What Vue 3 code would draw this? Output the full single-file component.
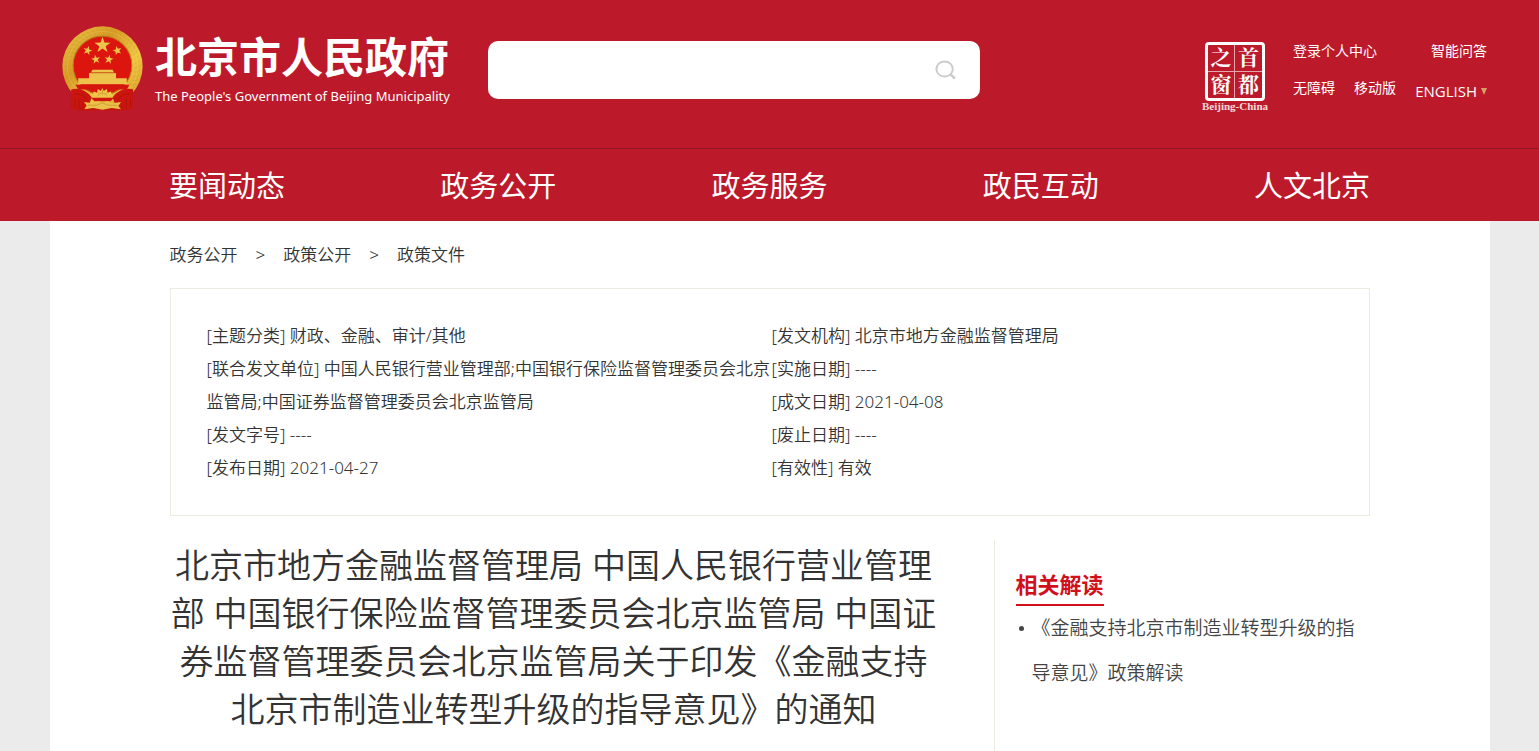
<script setup>
const nav = ['要闻动态', '政务公开', '政务服务', '政民互动', '人文北京']
const crumbs = ['政务公开', '政策公开', '政策文件']
const metaLeft = [
  ['主题分类', '财政、金融、审计/其他'],
  ['联合发文单位', '中国人民银行营业管理部;中国银行保险监督管理委员会北京监管局;中国证券监督管理委员会北京监管局'],
  ['发文字号', '----'],
  ['发布日期', '2021-04-27'],
]
const metaRight = [
  ['发文机构', '北京市地方金融监督管理局'],
  ['实施日期', '----'],
  ['成文日期', '2021-04-08'],
  ['废止日期', '----'],
  ['有效性', '有效'],
]
const star = (cx, cy, r, turn = 0) =>
  Array.from({ length: 10 }, (_, i) => {
    const a = ((i * 36 - 90 + turn) * Math.PI) / 180
    const d = i % 2 ? r * 0.4 : r
    return `${(cx + d * Math.cos(a)).toFixed(1)},${(cy + d * Math.sin(a)).toFixed(1)}`
  }).join(' ')
const stars = [
  star(120, 57, 25),
  star(76, 73, 14, 15),
  star(100, 99, 14, -10),
  star(139, 99, 14, 10),
  star(164, 73, 14, -15),
]
const rays = Array.from({ length: 48 }, (_, i) => i * 7.5)
</script>

<template>
  <div class="page">
    <header>
      <div class="top">
        <a class="brand" href="#">
          <svg class="emblem" viewBox="0 0 240 252" aria-hidden="true">
            <defs>
              <linearGradient id="gold" x1="0" y1="0" x2="1" y2="1">
                <stop offset="0" stop-color="#e9c64a" />
                <stop offset=".35" stop-color="#d79a24" />
                <stop offset=".65" stop-color="#f0c744" />
                <stop offset="1" stop-color="#d29220" />
              </linearGradient>
            </defs>
            <path d="M32 196 26 244 62 251 92 250 148 250 198 249 211 238 207 194Z" fill="#c3140d" />
            <circle cx="120" cy="120" r="119" fill="url(#gold)" />
            <g fill="none" stroke="#b98a22" stroke-width="2" opacity=".35">
              <path v-for="r in rays" :key="r" :transform="`rotate(${r} 120 120)`" d="M116 8q8 5 8 17" />
              <circle cx="120" cy="120" r="104" stroke="#f4dc73" />
            </g>
            <circle cx="120" cy="117" r="87" fill="#dc160e" stroke="#b87a18" stroke-width="3" />
            <g fill="#eac54a"><polygon v-for="s in stars" :key="s" :points="s" /></g>
            <g fill="#edc34c">
              <path d="M90 130h60l4 8H86zM80 139h80v17H80zM48 155h144v18H48z" />
            </g>
            <path d="M84 139h72" stroke="#b76a16" stroke-width="2" />
            <path d="M40 174h160l-8 14H48z" fill="#d5160e" />
            <path d="M27 188q38-8 61 24l-14 38-14-20-8 20-22-5zM211 188q-38-8-61 24l14 38 14-20 8 20 22-5z" fill="#cb150e" />
            <path d="M38 202q24-4 37 18M202 202q-24-4-37 18M38 214v28M203 214v28M50 216v30M191 216v30" fill="none" stroke="#a3130e" stroke-width="2" />
            <path d="m88 212 6-18 10 4 2-11 9 6 4-9 5 9 9-6 2 11 10-4 6 18z" fill="#efc64a" />
            <path d="M105 208q14-20 30 0M120 190v14M106 196l8 9M134 196l-8 9" fill="none" stroke="#c08a26" stroke-width="1.5" />
            <path d="M86 213h68l-10 10H96z" fill="#cf170f" />
            <path d="m65 225 27 4 15-7 13 6 14-6 14 7 27-4-8 12 8 10-28-4-27 5-27-5-27 4 7-11z" fill="#eac04a" />
            <path d="M77 235h26l17-7 17 7h26" fill="none" stroke="#b98024" stroke-width="1.5" />
          </svg>
          <span class="names">
            <strong>北京市人民政府</strong>
            <span class="en">The People's Government of Beijing Municipality</span>
          </span>
        </a>
        <form class="search" role="search" @submit.prevent>
          <input type="text" aria-label="搜索" />
          <button type="submit" aria-label="搜索">
            <svg width="22" height="22" viewBox="0 0 22 22" fill="none" stroke="#ccc" stroke-width="2">
              <ellipse cx="10.6" cy="10" rx="8.2" ry="7.6" />
              <path d="m16 15 5 4.5" stroke-width="2.4" />
            </svg>
          </button>
        </form>
        <a class="seal" href="#">
          <span class="stamp"><span>之</span><span>首</span><span>窗</span><span>都</span></span>
          <small>Beijing-China</small>
        </a>
        <div class="links">
          <div><a href="#">登录个人中心</a><a href="#">智能问答</a></div>
          <div>
            <a href="#">无障碍</a><a href="#">移动版</a>
            <a class="lang" href="#">ENGLISH<svg width="6" height="7" viewBox="0 0 6 7" aria-hidden="true"><path d="M0 0h6L3 7z" fill="#d9a066" /></svg></a>
          </div>
        </div>
      </div>
      <nav>
        <div><a v-for="n in nav" :key="n" href="#">{{ n }}</a></div>
      </nav>
    </header>

    <main>
      <div class="crumbs">
        <template v-for="(c, i) in crumbs" :key="c">
          <span v-if="i">&gt;</span><a href="#">{{ c }}</a>
        </template>
      </div>
      <section class="meta">
        <ul><li v-for="m in metaLeft" :key="m[0]">[{{ m[0] }}] {{ m[1] }}</li></ul>
        <ul><li v-for="m in metaRight" :key="m[0]">[{{ m[0] }}] {{ m[1] }}</li></ul>
      </section>
      <div class="body">
        <h1>北京市地方金融监督管理局 中国人民银行营业管理部 中国银行保险监督管理委员会北京监管局 中国证券监督管理委员会北京监管局关于印发《金融支持北京市制造业转型升级的指导意见》的通知</h1>
        <aside>
          <h2>相关解读</h2>
          <ul>
            <li><a href="#">《金融支持北京市制造业转型升级的指导意见》政策解读</a></li>
          </ul>
        </aside>
      </div>
    </main>
  </div>
</template>

<style>
body { background: #ebebeb; }
</style>

<style scoped>
.page {
  font-family: "Open Sans", "Noto Sans CJK SC", sans-serif;
  color: #333;
  display: flex;
  flex-direction: column;
  min-height: 100vh;
}
.page * { box-sizing: border-box; }
a { color: inherit; text-decoration: none; }
ul { list-style: none; margin: 0; padding: 0; }
header { background: #bc1a2b; color: #fff; }
.top { height: 148px; padding: 0 50px 0 62px; display: flex; align-items: flex-start; }
.brand { display: flex; gap: 12px; padding-top: 26px; }
.emblem { width: 81px; height: 85px; flex: none; }
.names { display: flex; flex-direction: column; width: 294px; white-space: nowrap; }
.names strong { font-size: 42px; line-height: 62px; font-weight: 700; }
.en { font-family: "Noto Sans", sans-serif; font-size: 13px; line-height: 16px; }
.search { margin: 41px 0 0 39px; width: 492px; height: 58px; background: #fff; border-radius: 10px; display: flex; align-items: center; padding-right: 24px; }
.search input { flex: 1; min-width: 0; height: 100%; border: 0; background: none; outline: 0; padding: 0 20px; font-size: 18px; }
.search button { border: 0; background: none; padding: 0; display: flex; }
.seal { margin: 42px 0 0 auto; width: 66px; display: flex; flex-direction: column; align-items: center; }
.stamp { width: 60px; height: 59px; border: 3px solid #fff; border-radius: 4px; display: grid; grid-template-columns: 1fr 1fr; grid-template-rows: 1fr 1fr; font-family: "Liberation Serif", "Noto Serif CJK SC", "Noto Sans CJK SC", serif; font-size: 21px; font-weight: 700; line-height: 27px; text-align: center; }
.stamp span { min-height: 0; overflow: hidden; }
.stamp span:nth-child(odd) { border-right: 1px solid #e5a5ac; }
.stamp span:nth-child(-n+2) { border-bottom: 1px solid #e5a5ac; }
.seal small { font: 700 11px/10px "Liberation Serif", serif; white-space: nowrap; color: #f6dcdf; }
.links { width: 196px; margin: 40px 0 0 25px; font-size: 14px; line-height: 22px; white-space: nowrap; }
.links div { display: flex; justify-content: space-between; align-items: flex-start; height: 37px; padding-right: 2px; }
.lang { font-size: 15px; padding-top: 3px; display: flex; align-items: center; gap: 4px; }
nav { border-top: 1px solid #921624; padding: 2px 120px 0; }
nav div { max-width: 1201px; margin: 0 auto; display: flex; justify-content: space-between; font-size: 29px; line-height: 70px; }
main { width: 100%; max-width: 1440px; margin: 0 auto; padding: 0 120px; background: #fff; flex: 1; }
.crumbs, .meta { font-family: "Noto Sans", "Noto Sans CJK SC", sans-serif; font-size: 17px; font-weight: 350; }
.crumbs { display: flex; gap: 18px; line-height: 67px; }
.meta { border: 1px solid #ebebe0; padding: 30px 32px 31px 36px; display: grid; grid-template-columns: 1fr 1fr; line-height: 33px; }
.body { margin-top: 24px; display: flex; align-items: stretch; }
h1 { flex: 1; margin: 0; padding: 1px 0; font-size: 34px; font-weight: 350; line-height: 48px; text-align: center; }
aside { width: 376px; margin-left: 56px; padding: 24px 0 0 21px; border-left: 1px solid #ebebe0; min-height: 211px; }
h2 { display: inline-block; margin: 0; color: #d0111b; font-size: 22px; line-height: 40px; border-bottom: 2px solid #d0111b; }
aside li { display: flex; font-size: 19px; font-weight: 350; line-height: 45px; color: #444; }
aside li::before { content: ""; flex: none; width: 5px; height: 5px; margin: 20px 8px 0 3px; border-radius: 50%; background: #444; }
</style>
